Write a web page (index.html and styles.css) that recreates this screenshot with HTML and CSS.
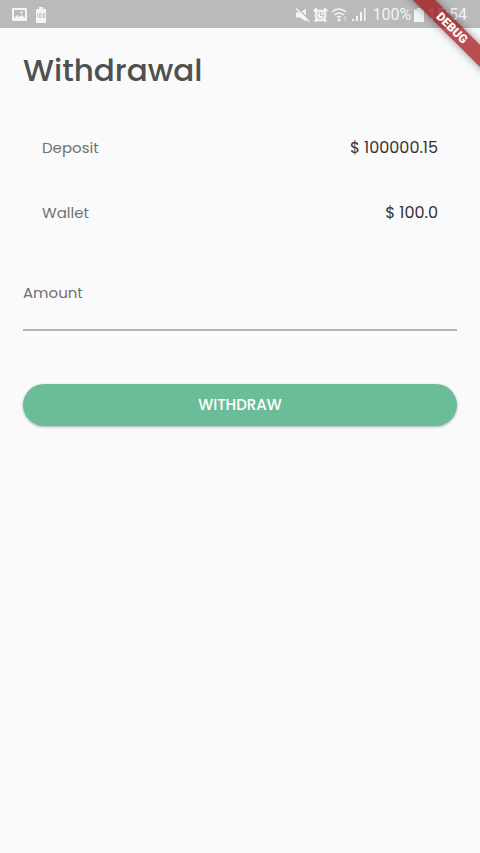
FILE: index.html
```html
<!DOCTYPE html>
<html lang="en">
<head>
<meta charset="utf-8">
<meta name="viewport" content="width=device-width, initial-scale=1">
<title>Withdrawal</title>
<link rel="stylesheet" href="styles.css">
</head>
<body>
<header class="status">
  <div class="status-group notices">
    <svg width="15" height="14" viewBox="0 0 15 14" aria-hidden="true"><path fill="currentColor" fill-rule="evenodd" d="M1 0h13a1 1 0 0 1 1 1v11a1 1 0 0 1-1 1H1a1 1 0 0 1-1-1V1a1 1 0 0 1 1-1zM2 2v8l3-3 2 2 3-2 3 3V2zM8.500 3.500h2v2h-2z"/></svg>
    <svg width="12" height="16" viewBox="0 0 12 16" aria-hidden="true"><path fill="currentColor" d="M4 0h4v2h3v14H1V2h3z"/><path fill="none" stroke="#bababa" stroke-width=".8" d="M2.500 6.500v4M4.500 6.500H6v4H4.500zM8 6.500h1.500v4H8z"/></svg>
  </div>
  <div class="status-group">
    <svg width="15" height="16" viewBox="0 0 15 16" aria-hidden="true"><path fill="currentColor" d="M1 5.500h4l6-4v13l-6-4H1z"/><path stroke="#bababa" stroke-width="1.500" d="M2.500 1l12 12"/><path stroke="currentColor" stroke-width="1.500" d="M1 1.500l13 13"/></svg>
    <svg width="15" height="16" viewBox="0 0 15 16" aria-hidden="true"><circle cx="7.500" cy="8.500" r="6" fill="currentColor"/><path fill="none" stroke="currentColor" stroke-width="2.500" d="M1 4.500l3-3M14 4.500l-3-3M4 12.500l-2 2M11 12.500l2 2"/><circle cx="7.500" cy="8.500" r="3.500" fill="none" stroke="#bababa" stroke-width=".8"/><path fill="none" stroke="#bababa" d="M7.500 5.500v3H10"/></svg>
    <svg width="18" height="16" viewBox="0 0 18 16" aria-hidden="true"><path fill="none" stroke="currentColor" stroke-width="1.600" d="M1 5q7-6 14 0M3.500 8q4.500-4 9 0M6 10.500q2-2 4 0"/><circle cx="8" cy="13" r="1.500" fill="currentColor"/><path fill="currentColor" opacity=".5" d="M12 11l2-2 2 2zM12 12h4l-2 2z"/></svg>
    <svg width="14" height="16" viewBox="0 0 14 16" aria-hidden="true"><path fill="currentColor" d="M0 12h2v2H0zM4 9h2v5H4zM8 5h2v9H8zM12 1h1.500v13H12z"/></svg>
    <span class="percent">100%</span>
    <svg width="10" height="16" viewBox="0 0 10 16" aria-hidden="true"><path fill="currentColor" d="M3 1h4v1.500h3V15H0V2.500h3z"/></svg>
    <span>15:54</span>
  </div>
</header>
<div class="corner"><span class="ribbon">DEBUG</span></div>
<main class="page">
  <h1 class="title">Withdrawal</h1>
  <dl class="balances">
    <div class="balance"><dt>Deposit</dt><dd>$ 100000.15</dd></div>
    <div class="balance"><dt>Wallet</dt><dd>$ 100.0</dd></div>
  </dl>
  <form class="form">
    <label class="label" for="amount">Amount</label>
    <input class="amount" id="amount" type="text" inputmode="decimal">
    <button class="submit" type="button">WITHDRAW</button>
  </form>
</main>
</body>
</html>
```
FILE: styles.css
```css
* {
  box-sizing: border-box;
}

body {
  margin: 0;
  min-height: 100vh;
  background: #fafafa;
  color: #333;
  font: 16px/24px Poppins, "Open Sans", sans-serif;
}

.status {
  display: flex;
  justify-content: space-between;
  align-items: center;
  height: 28px;
  padding: 2px 13px 0 12px;
  background: #bababa;
  color: #f4f4f4;
  font: 16px/24px Roboto, sans-serif;
}

.status-group {
  display: flex;
  align-items: center;
  gap: 3px;
}

.notices {
  gap: 8px;
}

.percent {
  margin-left: 3px;
}

.corner {
  position: absolute;
  top: 0;
  right: 0;
  width: 80px;
  height: 80px;
  overflow: hidden;
  pointer-events: none;
}

.ribbon {
  position: absolute;
  top: 20px;
  left: -8px;
  width: 120px;
  height: 16px;
  background: rgba(160, 10, 15, 0.72);
  box-shadow: 0 0 8px rgba(0, 0, 0, 0.4);
  color: #fff;
  font: 900 12px/16px Roboto, sans-serif;
  text-align: center;
  transform: rotate(45deg);
}

.page {
  padding: 22px 23px;
}

.title {
  margin: 0;
  color: #505050;
  font-size: 31px;
  font-weight: 500;
  line-height: 40px;
}

.balances {
  display: grid;
  gap: 41px;
  margin: 46px 19px 56px;
}

.balance {
  display: flex;
  justify-content: space-between;
}

.balance dt {
  color: #707070;
  font-size: 15px;
}

.balance dd {
  margin: 0;
}

.form {
  display: flex;
  flex-direction: column;
}

.label {
  color: #707070;
  font-size: 15px;
}

.amount {
  width: 100%;
  height: 26px;
  padding: 0;
  border: 0;
  border-bottom: 2px solid #b4b4b4;
  border-radius: 0;
  outline: 0;
  background: transparent;
  color: inherit;
  font: inherit;
}

.submit {
  height: 42px;
  margin-top: 53px;
  border: 0;
  border-radius: 21px;
  background: #6bbd99;
  box-shadow: 0 1px 3px rgba(0, 0, 0, 0.3);
  color: #fff;
  font: inherit;
  font-size: 15px;
  font-weight: 500;
}
```
